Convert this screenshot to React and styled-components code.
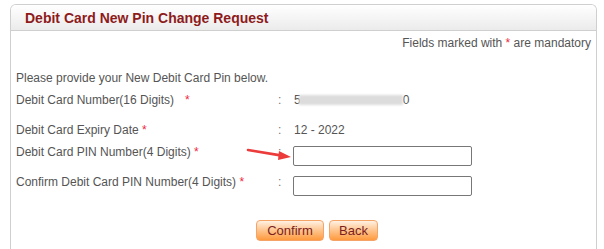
import React from 'react'
import styled, { createGlobalStyle } from 'styled-components'

const Global = createGlobalStyle`
  body {
    margin: 0;
    background: #fff;
    font-family: "Liberation Sans", Arial, sans-serif;
    font-size: 12px;
    color: #555;
  }
`

const Panel = styled.div`
  box-sizing: border-box;
  margin: 4px 7px 0 10px;
  height: 245px;
  border: 1px solid #cfcfcf;
  border-bottom: none;
  border-radius: 6px 6px 0 0;
  overflow: hidden;
`

const Header = styled.div`
  height: 25px;
  display: flex;
  align-items: center;
  padding-left: 14px;
  background: linear-gradient(#ffffff, #ebebeb);
  border-bottom: 1px solid #cfcfcf;
  color: #8e1b1b;
  font-size: 14px;
  font-weight: bold;
`

const Mandatory = styled.div`
  text-align: right;
  padding: 5px 5px 0 0;
  line-height: 14px;
`

const Star = styled.span`
  color: #f0283c;
  margin-left: ${(p) => p.$space || 0}px;
`

const Intro = styled.div`
  margin-top: 21px;
  padding-left: 5px;
  line-height: 14px;
`

const Row = styled.div`
  position: relative;
  display: grid;
  grid-template-columns: 262px 15px 1fr;
  align-items: start;
  margin-top: ${(p) => p.$gap}px;
  padding-left: 5px;
  line-height: 14px;
`

const Colon = styled.span`
  color: #777;
`

const Value = styled.span`
  display: flex;
  align-items: center;
  color: #555;
  padding-left: 1px;
`

const Masked = styled.span`
  display: inline-block;
  width: 104px;
  height: 10px;
  margin-left: -2px;
  background: #dcdcdc;
  filter: blur(1px);
`

const Input = styled.input`
  box-sizing: border-box;
  width: 179px;
  height: 20px;
  margin: 1px 0 0;
  border: 1px solid #777;
  border-radius: 2px;
  padding: 0 3px;
  font: inherit;
  outline: none;
`

const Arrow = styled.svg`
  position: absolute;
  left: 237px;
  top: 3px;
  overflow: visible;
`

const Buttons = styled.div`
  display: flex;
  gap: 5px;
  margin-top: 24px;
  padding-left: 245px;
`

const Button = styled.button`
  height: 21px;
  width: ${(p) => p.$w}px;
  padding: 0;
  border: 1px solid #f4a468;
  border-radius: 4px;
  background: linear-gradient(#fff1e2 0%, #ffc894 45%, #ff9a3e 100%);
  color: #7a1e1e;
  font-family: "Liberation Sans", Arial, sans-serif;
  font-size: 13px;
  cursor: pointer;
`

export default function App() {
  return (
    <>
      <Global />
      <Panel>
        <Header>Debit Card New Pin Change Request</Header>
        <Mandatory>
          Fields marked with <Star>*</Star> are mandatory
        </Mandatory>
        <Intro>Please provide your New Debit Card Pin below.</Intro>
        <Row $gap={8}>
          <span>
            Debit Card Number(16 Digits)<Star $space={11}>*</Star>
          </span>
          <Colon>:</Colon>
          <Value>
            5<Masked />0
          </Value>
        </Row>
        <Row $gap={16}>
          <span>
            Debit Card Expiry Date <Star>*</Star>
          </span>
          <Colon>:</Colon>
          <Value>12 - 2022</Value>
        </Row>
        <Row $gap={8}>
          <span>
            Debit Card PIN Number(4 Digits) <Star>*</Star>
          </span>
          <Colon>:</Colon>
          <Input type="password" />
          <Arrow width="44" height="10" viewBox="0 0 44 10">
            <line x1="0" y1="2" x2="34" y2="7.6" stroke="#ec3b3b" strokeWidth="2.6" strokeLinecap="round" />
            <polygon points="43,9 31,3 30,12" fill="#ec3b3b" />
          </Arrow>
        </Row>
        <Row $gap={9}>
          <span>
            Confirm Debit Card PIN Number(4 Digits) <Star>*</Star>
          </span>
          <Colon>:</Colon>
          <Input type="password" />
        </Row>
        <Buttons>
          <Button $w={68}>Confirm</Button>
          <Button $w={49}>Back</Button>
        </Buttons>
      </Panel>
    </>
  )
}
